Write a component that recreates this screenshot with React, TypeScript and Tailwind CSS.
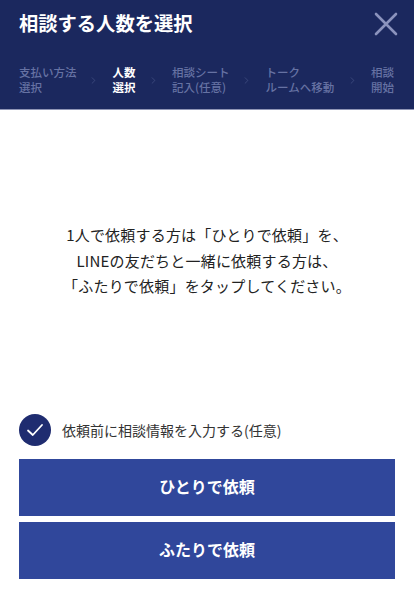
import { ChevronRight } from 'lucide-react'

const font = "font-['Noto_Sans_CJK_JP','Noto_Sans_CJK_SC',sans-serif]"

const steps = [
  { lines: ['支払い方法', '選択'], width: 'w-[58px]', active: false },
  { lines: ['人数', '選択'], width: 'w-[24px]', active: true },
  { lines: ['相談シート', '記入(任意)'], width: 'w-[58px]', active: false },
  { lines: ['トーク', 'ルームへ移動'], width: 'w-[70px]', active: false },
  { lines: ['相談', '開始'], width: 'w-[24px]', active: false },
]

export default function App() {
  return (
    <div className={`${font} w-[414px] h-[600px] bg-white flex flex-col overflow-hidden`}>
      {/* header */}
      <div className="bg-[#1b285e] h-[109px] px-[19px] border-b border-[#8f95b5] box-content">
        <div className="flex items-center justify-between h-[47px]">
          <h1 className="text-[19.3px] font-bold text-white leading-none">相談する人数を選択</h1>
          <svg width="24" height="24" viewBox="0 0 24 24" className="mr-[-3px] mt-[1px]">
            <path d="M2 2 L22 22 M22 2 L2 22" stroke="#8b93bd" strokeWidth="2.6" strokeLinecap="round" />
          </svg>
        </div>
        <div className="flex items-center justify-between mt-[18px]">
          {steps.map((step, i) => (
            <div key={i} className="flex items-center">
              <div
                className={`${step.width} text-[11.5px] leading-[15px] whitespace-nowrap ${
                  step.active ? 'text-white font-bold' : 'text-[#6672a3] font-medium'
                }`}
              >
                <div>{step.lines[0]}</div>
                <div>{step.lines[1]}</div>
              </div>
              {i < steps.length - 1 && (
                <ChevronRight size={11} strokeWidth={1} className="text-[#5d6a9c] ml-[11px]" />
              )}
            </div>
          ))}
        </div>
      </div>

      {/* message */}
      <div className="h-[304px] flex flex-col items-center pt-[112px] text-[15px] leading-[25.5px] text-[#222] tracking-[0.2px]">
        <p>1人で依頼する方は「ひとりで依頼」を、</p>
        <p>LINEの友だちと一緒に依頼する方は、</p>
        <p>「ふたりで依頼」をタップしてください。</p>
      </div>

      {/* checkbox */}
      <div className="flex items-center gap-[11px] px-[19px] h-[32px]">
        <div className="w-[32px] h-[32px] rounded-full bg-[#1f2c70] flex items-center justify-center">
          <svg width="18" height="14" viewBox="0 0 18 14">
            <path d="M2 7.5 L6.8 12 L16 2" fill="none" stroke="white" strokeWidth="1.8" strokeLinecap="round" strokeLinejoin="round" />
          </svg>
        </div>
        <span className="text-[14px] text-[#333]">依頼前に相談情報を入力する(任意)</span>
      </div>

      {/* buttons */}
      <div className="flex flex-col gap-[6px] px-[19px] mt-[13px]">
        <button className="h-[57px] pb-[4px] bg-[#30479b] text-white text-[16px] font-bold">ひとりで依頼</button>
        <button className="h-[57px] pb-[4px] bg-[#30479b] text-white text-[16px] font-bold">ふたりで依頼</button>
      </div>
    </div>
  )
}
